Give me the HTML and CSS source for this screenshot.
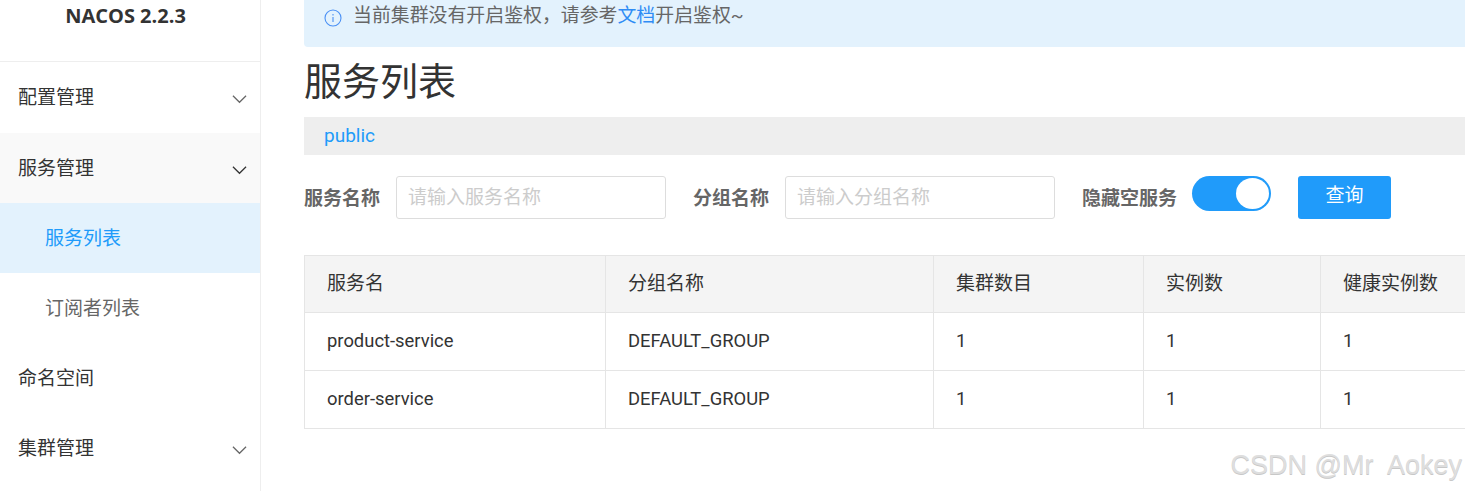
FILE: index.html
```html
<!DOCTYPE html>
<html lang="zh-CN">
<head>
<meta charset="utf-8">
<title>NACOS 服务列表</title>
<link rel="stylesheet" href="styles.css">
</head>
<body>
<div class="app">
  <aside class="sidebar">
    <div class="logo">NACOS 2.2.3</div>
    <nav class="menu">
      <div class="item">配置管理<svg class="chev" viewBox="0 0 16 10"><path d="M1 1.5 8 8.5 15 1.5"/></svg></div>
      <div class="item open">服务管理<svg class="chev" viewBox="0 0 16 10"><path d="M1 1.5 8 8.5 15 1.5"/></svg></div>
      <div class="item sub active">服务列表</div>
      <div class="item sub">订阅者列表</div>
      <div class="item">命名空间</div>
      <div class="item">集群管理<svg class="chev" viewBox="0 0 16 10"><path d="M1 1.5 8 8.5 15 1.5"/></svg></div>
    </nav>
  </aside>
  <main class="main">
    <div class="alert">
      <svg class="info" viewBox="0 0 18 18"><circle cx="9" cy="9" r="8"/><path d="M9 8v5M9 5v1.4"/></svg>
      <span>当前集群没有开启鉴权，请参考<a class="link">文档</a>开启鉴权~</span>
    </div>
    <h1 class="title">服务列表</h1>
    <div class="ns"><span>public</span></div>
    <form class="filters">
      <label class="lbl">服务名称</label>
      <div class="input first">请输入服务名称</div>
      <label class="lbl">分组名称</label>
      <div class="input second">请输入分组名称</div>
      <label class="lbl">隐藏空服务</label>
      <div class="switch"><span class="knob"></span></div>
      <div class="btn">查询</div>
    </form>
    <div class="table">
      <div class="row head">
        <div class="c c1">服务名</div><div class="c c2">分组名称</div><div class="c c3">集群数目</div><div class="c c4">实例数</div><div class="c c5">健康实例数</div>
      </div>
      <div class="row">
        <div class="c c1">product-service</div><div class="c c2">DEFAULT_GROUP</div><div class="c c3">1</div><div class="c c4">1</div><div class="c c5">1</div>
      </div>
      <div class="row">
        <div class="c c1">order-service</div><div class="c c2">DEFAULT_GROUP</div><div class="c c3">1</div><div class="c c4">1</div><div class="c c5">1</div>
      </div>
    </div>
  </main>
</div>
<div class="mark">CSDN @Mr&nbsp; Aokey</div>
</body>
</html>
```
FILE: styles.css
```css
* { box-sizing: border-box; }
html, body { margin: 0; height: 491px; overflow: hidden; background: #fff; }
body { font-family: Roboto, "Noto Sans CJK SC", sans-serif; color: #333; position: relative; }
.app { display: flex; width: 1465px; height: 491px; overflow: hidden; }
.sidebar { width: 261px; flex: none; border-right: 1px solid #eee; }
.logo { height: 62px; border-bottom: 1px solid #eee; padding: 3px 9px 0 0; text-align: center; font: bold 20px/26px "Open Sans", sans-serif; color: #333; }
.item { height: 70px; display: flex; align-items: center; justify-content: space-between; padding: 0 13px 3px 18px; font-size: 19px; color: #333; }
.item.open { background: #f9f9f9; margin-top: 1px; }
.item.sub { padding-left: 45px; color: #666; }
.item.active { background: #e3f2fd; color: #209bfa; }
.chev { width: 15px; height: 10px; margin-top: 7px; fill: none; stroke: #666; stroke-width: 1.3; }
.open .chev { stroke: #333; }
.main { flex: 1; min-width: 0; padding-left: 43px; }
.alert { height: 47px; background: #e3f2fd; border-radius: 0 0 0 4px; display: flex; align-items: flex-start; padding: 3px 0 0 20px; font-size: 18.9px; line-height: 26px; color: #666; }
.info { width: 18px; height: 18px; margin: 6px 11px 0 0; fill: none; stroke: #4a90f5; stroke-width: 1.1; flex: none; }
.link { color: #2f8cf5; }
.title { margin: 0; height: 70px; font-size: 38px; line-height: 70px; font-weight: 400; color: #333; }
.ns { height: 38px; background: #eee; padding-left: 20px; font-size: 19px; line-height: 37px; color: #209bfa; }
.filters { display: flex; align-items: center; height: 44px; margin-top: 20px; }
.lbl { font-size: 19px; font-weight: 700; color: #666; padding-bottom: 1px; }
.input { height: 43px; border: 1px solid #ddd; border-radius: 3px; font-size: 19px; line-height: 41px; padding-left: 11px; color: #ccc; margin: 0 27px 0 16px; width: 270px; }
.switch { width: 79px; height: 35px; background: #209bfa; border-radius: 18px; margin: -8px 27px 0 15px; position: relative; flex: none; }
.knob { position: absolute; right: 2px; top: 2px; width: 33px; height: 31px; background: #fff; border-radius: 50%; }
.btn { width: 93px; height: 43px; background: #209bfa; color: #fff; font-size: 19px; line-height: 39px; text-align: center; border-radius: 3px; }
.table { margin-top: 36px; border: 1px solid #e5e5e5; border-width: 1px 0 0 1px; width: 1161px; }
.row { display: flex; height: 58px; border-bottom: 1px solid #e5e5e5; }
.row.head { height: 57px; background: #f4f4f4; font-size: 19px; }
.row:not(.head) { font-size: 18.4px; }
.c { padding-left: 22px; line-height: 55px; border-right: 1px solid #e5e5e5; flex: none; }
.row:not(.head) .c { line-height: 55px; }
.c1 { width: 301px; }
.c2 { width: 328px; }
.c3 { width: 210px; }
.c4 { width: 177px; }
.c5 { flex: 1; border-right: 0; }
.mark { position: absolute; right: 3px; top: 448px; font: 27px/34px "Liberation Sans", sans-serif; color: #dedede; text-shadow: 0 1px 0 #c8c8c8; white-space: nowrap; }
```
